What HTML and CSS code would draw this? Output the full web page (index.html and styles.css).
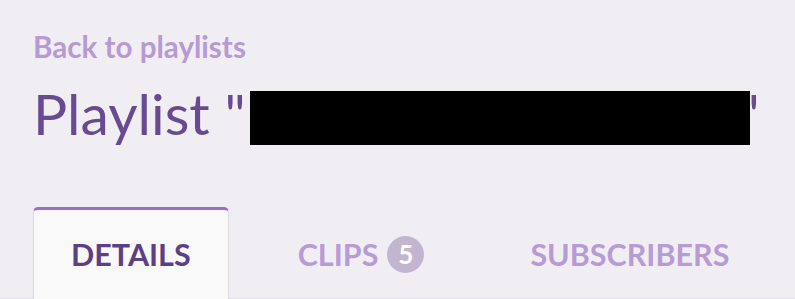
FILE: index.html
```html
<!DOCTYPE html>
<html lang="en">
<head>
<meta charset="utf-8">
<title>Playlist</title>
<link rel="stylesheet" href="styles.css">
</head>
<body>
<div class="page">
  <a class="back" href="#">Back to playlists</a>
  <h1 class="title">Playlist "<span class="redact"></span><span class="close-quote">"</span></h1>
  <nav class="tabs">
    <div class="tab active">DETAILS</div>
    <div class="tab">CLIPS<span class="badge">5</span></div>
    <div class="tab">SUBSCRIBERS</div>
  </nav>
</div>
</body>
</html>
```
FILE: styles.css
```css
html, body {
  margin: 0;
  padding: 0;
  height: 299px;
  overflow: hidden;
}
body {
  background: #f0eef3;
  font-family: Lato, "Noto Sans", sans-serif;
}
.page {
  padding: 29px 0 0 33px;
}
.back {
  display: block;
  font-size: 29.6px;
  line-height: 1.2;
  font-weight: 700;
  color: #b59ad4;
  text-decoration: none;
}
.title {
  margin: 14px 0 0 0;
  font-size: 57px;
  line-height: 1.2;
  font-weight: 400;
  color: #674a8f;
  white-space: nowrap;
}
.redact {
  display: inline-block;
  width: 500px;
  height: 54px;
  background: #000;
  vertical-align: -10px;
  margin-left: 4px;
  position: relative;
  z-index: 1;
}
.close-quote {
  margin-left: -11px;
}
.tabs {
  display: flex;
  gap: 32px;
  margin: 60px 0 0 -33px;
  padding-left: 33px;
  height: 91px;
  border-bottom: 1px solid #e3e1e7;
}
.tab {
  display: flex;
  align-items: flex-start;
  padding: 26px 37px 0;
  font-size: 30.5px;
  line-height: 36px;
  font-weight: 700;
  color: #b69bd5;
  border-top: 3px solid transparent;
}
.tab.active {
  background: #f9f9f9;
  color: #5d3f85;
  border: 1px solid #dcd8e0;
  border-top: 3px solid #9c6cd0;
  border-bottom: none;
  border-radius: 5px 5px 0 0;
  height: 92px;
  box-sizing: border-box;
  margin-bottom: -1px;
}
.badge {
  display: inline-flex;
  align-items: center;
  justify-content: center;
  width: 37px;
  height: 37px;
  margin-left: 9px;
  border-radius: 50%;
  background: #c1b5cf;
  color: #fff;
  font-size: 26px;
  line-height: 1;
}
```
